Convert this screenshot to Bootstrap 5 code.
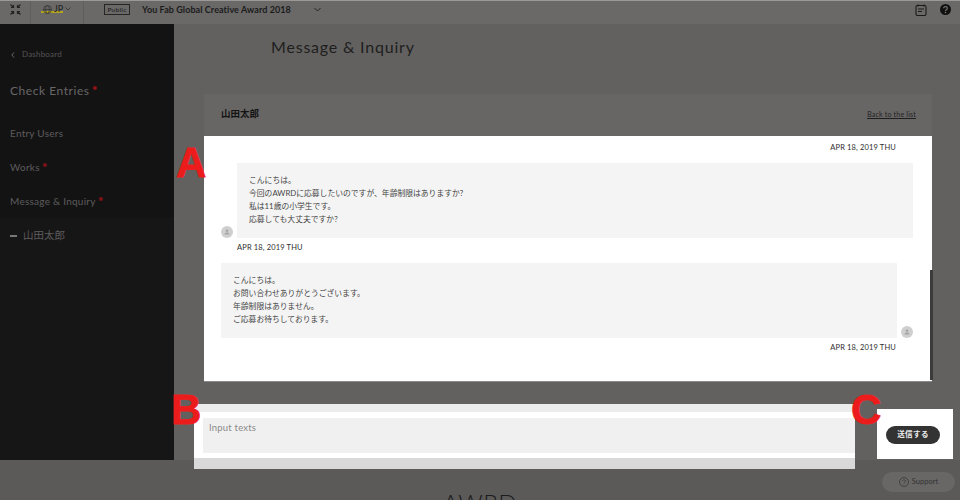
<!DOCTYPE html>
<html lang="ja">
<head>
    <meta charset="UTF-8">
    <meta name="viewport" content="width=device-width, initial-scale=1.0">
    <title>Message &amp; Inquiry</title>
    <link rel="stylesheet" href="https://cdn.jsdelivr.net/npm/bootstrap@5.3.2/dist/css/bootstrap.min.css">
    <style>
        html, body { height: 500px; overflow: hidden; }
        body { background: #5b5a59; font-family: "Lato", "Noto Sans CJK JP", sans-serif; color: #222; position: relative; }
        .top-strip { height: 24px; background: #6a6968; border-top: 1px solid #9a9998; color: #181818; }
        .top-cell { height: 23px; padding-bottom: 7px; border-right: 1px solid #5f5e5d; }
        .cell-logo { width: 31px; }
        .cell-lang { width: 53px; font-size: 9px; gap: 2px; color: #222; position: relative; }
        .lang-mark { position: absolute; left: 10px; top: 10px; width: 22px; height: 2px; background: #b3a51e; }
        .top-line { height: 23px; padding-bottom: 6px; }
        .public-tag { margin-left: 20px; width: 26px; height: 11px; border: 1px solid #262626; font-size: 6.5px; line-height: 9px; text-align: center; letter-spacing: .3px; }
        .top-title { margin-left: 12px; font-size: 9px; font-weight: 700; letter-spacing: .08px; color: #1b1b1b; }
        .top-caret { margin-left: 23px; }
        .top-right { margin-left: auto; padding-right: 9px; gap: 13px; }
        .page-body { height: 436px; }
        .side-nav { width: 174px; flex: none; background: #141314; color: #5d5c5c; }
        .side-back { padding: 24px 0 0 11px; font-size: 8px; letter-spacing: .2px; height: 49px; gap: 7px; color: #555454; }
        .side-title { padding: 9px 0 0 10px; height: 43px; font-size: 12px; letter-spacing: .55px; color: #686767; }
        .side-link { padding-left: 10px; height: 34px; font-size: 10px; letter-spacing: .25px; line-height: 34px; }
        .side-sub { background: #171617; flex: 1; padding: 0 0 0 10px; font-size: 10.5px; line-height: 34px; }
        .side-dash { width: 7px; height: 2px; background: #777; display: inline-block; vertical-align: middle; margin-right: 6px; }
        .red-dot { display: inline-block; width: 4px; height: 4px; border-radius: 50%; background: #7c1116; vertical-align: top; margin: 13px 0 0 3px; }
        .side-title .red-dot { margin-top: 4px; background: #8e1217; }
        .main-col { background: #62615f; min-width: 0; }
        .main-head { height: 70px; padding: 11px 0 0 97px; font-size: 16px; letter-spacing: .8px; color: #1e1e1e; }
        .thread-head { margin-left: 30px; width: 728px; height: 42px; padding: 0 16px 2px 17px; background: #686665; font-size: 9.5px; color: #141414; font-weight: 700; }
        .thread-link { font-size: 7px; font-weight: 400; text-decoration: underline; color: #1f1f1f; letter-spacing: .2px; }
        .thread-box { margin-left: 30px; width: 728px; height: 245px; background: #fff; position: relative; box-shadow: 0 1px 0 #8a8a8a; font-size: 7.8px; line-height: 13px; color: #444; }
        .thread-bar { position: absolute; left: 726px; top: 134px; width: 3px; height: 110px; background: #3c3b3b; }
        .stamp { font-size: 7.5px; line-height: 10px; letter-spacing: .15px; color: #2e2e2e; }
        .stamp-a { text-align: right; padding: 7px 36px 0 0; margin-bottom: 10px; }
        .stamp-b { padding-left: 33px; margin: 5px 0 10px; }
        .stamp-c { text-align: right; padding-right: 36px; margin-top: 5px; }
        .msg-in { margin: 0 19px 0 33px; height: 75px; padding: 11px 12px; background: #f4f4f4; position: relative; }
        .msg-out { margin: 0 35px 0 17px; height: 75px; padding: 11px 12px; background: #f4f4f4; position: relative; }
        .face { position: absolute; bottom: 0; width: 12px; height: 12px; border-radius: 50%; background: #cfcfcf; display: flex; align-items: center; justify-content: center; }
        .msg-in .face { left: -16px; }
        .msg-out .face { right: -16px; }
        .compose-row { height: 65px; margin-top: 23px; margin-left: 20px; }
        .input-shell { width: 661px; height: 65px; padding-top: 8px; background-image: linear-gradient(#ececec 0 8px, #fff 8px 54px, #d9d9d9 54px); }
        .input-field { margin: 6px 0 0 9px; height: 35px; width: 652px; background: #f0f0f0; padding: 3px 6px; font-size: 9.500px; letter-spacing: .2px; color: #8a8a8a; }
        .send-shell { width: 76px; height: 50px; margin: 5px 0 0 22px; padding: 2px 4px 0 0; background: #fff; }
        .send-btn { width: 54px; height: 18px; padding: 0; border: 0; border-radius: 9px; background: #333; color: #eee; font-size: 7.5px; font-weight: 700; letter-spacing: .4px; }
        .page-foot { height: 40px; position: relative; overflow: hidden; }
        .foot-brand { text-align: center; font-size: 24px; letter-spacing: .6px; color: #1c1c1c; padding-top: 29px; line-height: 28px; font-weight: 300; }
        .support-pill { position: absolute; right: 5px; top: 12px; width: 73px; height: 20px; border-radius: 10px; background: #686766; font-size: 7.5px; color: #333; gap: 3px; }
        .mark-letter { position: absolute; color: #ed1c1c; font-weight: 700; font-family: "Liberation Sans", sans-serif; font-size: 42px; line-height: 1; -webkit-text-stroke: .8px #ed1c1c; }
        .mark-a { left: 176px; top: 142px; }
        .mark-b { left: 171px; top: 389px; }
        .mark-c { left: 851px; top: 389px; }
    </style>
</head>
<body>
    <header class="top-strip d-flex align-items-start">
        <div class="top-cell cell-logo d-flex align-items-center justify-content-center">
            <svg width="13" height="13" viewBox="0 0 13 13" fill="none" stroke="#222" stroke-width="1.2"><path d="M1.500 1.500l3 3M4.500 2v2.500H2M11.500 1.500l-3 3M8.500 2v2.500H11M1.500 11.500l3-3M4.500 11V8.500H2M11.500 11.500l-3-3M8.500 11V8.500H11"/></svg>
        </div>
        <div class="top-cell cell-lang d-flex align-items-center justify-content-center">
            <span class="lang-mark"></span>
            <svg class="position-relative" width="9" height="9" viewBox="0 0 10 10" fill="none" stroke="#333" stroke-width=".8"><circle cx="5" cy="5" r="4.400"/><ellipse cx="5" cy="5" rx="2" ry="4.400"/><path d="M.6 5h8.800"/></svg>
            <span class="position-relative">JP</span>
            <svg width="6" height="4" viewBox="0 0 6 4" fill="none" stroke="#333" stroke-width=".8"><path d="M.5.500L3 3 5.500.500"/></svg>
        </div>
        <div class="top-line d-flex align-items-center flex-grow-1">
            <span class="public-tag">Public</span>
            <span class="top-title">You Fab Global Creative Award 2018</span>
            <svg class="top-caret" width="7" height="5" viewBox="0 0 7 5" fill="none" stroke="#222"><path d="M.5 1L3.500 4 6.500 1"/></svg>
            <div class="top-right d-flex align-items-center">
                <svg width="12" height="12" viewBox="0 0 12 12" fill="none" stroke="#1a1a1a" stroke-width="1.100"><rect x="1" y="1.500" width="10" height="10" rx="1.500"/><path d="M3 .500v2M9 .500v2M3 5h6M3 7.500h4"/></svg>
                <svg width="11" height="11" viewBox="0 0 11 11"><circle cx="5.500" cy="5.500" r="5.500" fill="#111"/><path d="M3.700 4.200a1.800 1.700 0 1 1 2.700 1.500c-.6.300-.9.600-.9 1.200" fill="none" stroke="#777" stroke-width="1.200"/><circle cx="5.500" cy="8.500" r=".8" fill="#777"/></svg>
            </div>
        </div>
    </header>

    <div class="page-body d-flex">
        <nav class="side-nav d-flex flex-column">
            <div class="side-back d-flex align-items-start">
                <svg class="mt-1" width="4" height="6" viewBox="0 0 4 6" fill="none" stroke="#6b6a6a"><path d="M3 .5L.8 3 3 5.500"/></svg>
                <span>Dashboard</span>
            </div>
            <div class="side-title">Check Entries<span class="red-dot"></span></div>
            <div class="side-link">Entry Users</div>
            <div class="side-link">Works<span class="red-dot"></span></div>
            <div class="side-link">Message &amp; Inquiry<span class="red-dot"></span></div>
            <div class="side-sub"><span class="side-dash"></span>山田太郎</div>
        </nav>

        <main class="main-col flex-grow-1">
            <div class="main-head">Message &amp; Inquiry</div>
            <div class="thread-head d-flex align-items-center justify-content-between">
                <span>山田太郎</span>
                <a class="thread-link" href="#">Back to the list</a>
            </div>
            <div class="thread-box">
                <div class="thread-bar"></div>
                <div class="stamp stamp-a">APR 18, 2019 THU</div>
                <div class="msg-in">
                    <span class="face"><svg width="6" height="6" viewBox="0 0 6 6" fill="#a5a5a5"><circle cx="3" cy="1.700" r="1.300"/><path d="M.6 5.500c0-1.400 1-2 2.400-2s2.400.6 2.400 2z"/></svg></span>
                    こんにちは。<br>今回のAWRDに応募したいのですが、年齢制限はありますか?<br>私は11歳の小学生です。<br>応募しても大丈夫ですか?
                </div>
                <div class="stamp stamp-b">APR 18, 2019 THU</div>
                <div class="msg-out">
                    <span class="face"><svg width="6" height="6" viewBox="0 0 6 6" fill="#a5a5a5"><circle cx="3" cy="1.700" r="1.300"/><path d="M.6 5.500c0-1.400 1-2 2.400-2s2.400.6 2.400 2z"/></svg></span>
                    こんにちは。<br>お問い合わせありがとうございます。<br>年齢制限はありません。<br>ご応募お待ちしております。
                </div>
                <div class="stamp stamp-c">APR 18, 2019 THU</div>
            </div>
            <div class="compose-row d-flex align-items-start">
                <div class="input-shell"><div class="input-field">Input texts</div></div>
                <div class="send-shell d-flex align-items-center justify-content-center">
                    <button class="btn send-btn" type="button">送信する</button>
                </div>
            </div>
        </main>
    </div>

    <footer class="page-foot">
        <div class="foot-brand">AWRD</div>
        <div class="support-pill d-flex align-items-center justify-content-center">
            <svg width="10" height="10" viewBox="0 0 10 10" fill="none" stroke="#333" stroke-width=".7"><circle cx="5" cy="5" r="4.500"/><path d="M3.600 4a1.400 1.300 0 1 1 2.100 1.200c-.5.200-.7.500-.7.900M5 7.300v.6"/></svg>
            <span>Support</span>
        </div>
    </footer>

    <span class="mark-letter mark-a">A</span>
    <span class="mark-letter mark-b">B</span>
    <span class="mark-letter mark-c">C</span>

    <script src="https://cdn.jsdelivr.net/npm/bootstrap@5.3.2/dist/js/bootstrap.bundle.min.js"></script>
</body>
</html>
